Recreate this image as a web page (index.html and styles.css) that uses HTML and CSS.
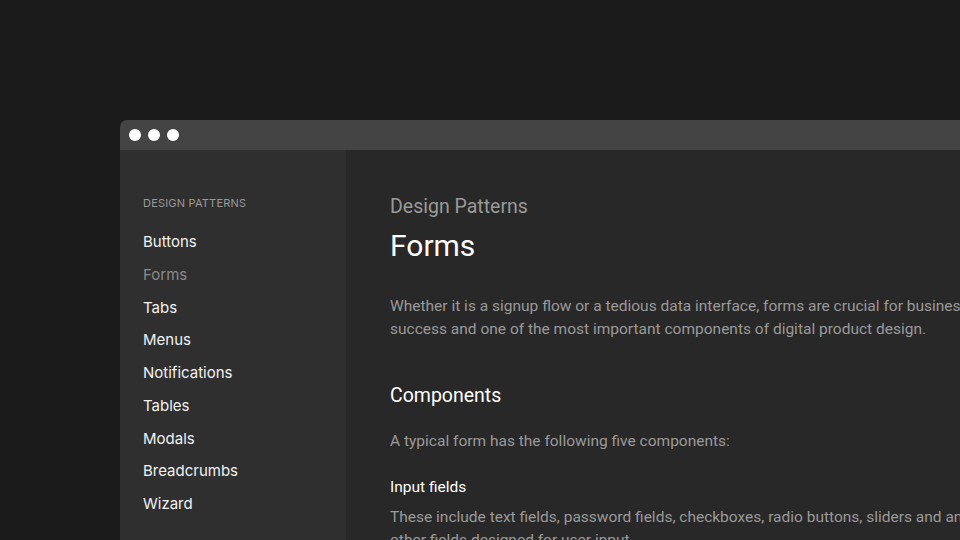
FILE: index.html
```html
<!DOCTYPE html>
<html lang="en">
<head>
  <meta charset="UTF-8" />
  <title>Design Patterns – Forms</title>
  <link rel="stylesheet" href="styles.css">
</head>
<body>
  <div class="window">
    <div class="titlebar">
      <span class="dot"></span>
      <span class="dot"></span>
      <span class="dot"></span>
    </div>
    <div class="body">
      <nav class="sidebar">
        <div class="nav-title">Design Patterns</div>
        <a class="nav-item" href="#">Buttons</a>
        <a class="nav-item active" href="#">Forms</a>
        <a class="nav-item" href="#">Tabs</a>
        <a class="nav-item" href="#">Menus</a>
        <a class="nav-item" href="#">Notifications</a>
        <a class="nav-item" href="#">Tables</a>
        <a class="nav-item" href="#">Modals</a>
        <a class="nav-item" href="#">Breadcrumbs</a>
        <a class="nav-item" href="#">Wizard</a>
      </nav>
      <main class="content">
        <div class="crumb">Design Patterns</div>
        <h1>Forms</h1>
        <p class="lead">Whether it is a signup flow or a tedious data interface, forms are crucial for business success and one of the most important components of digital product design.</p>
        <h2>Components</h2>
        <p>A typical form has the following five components:</p>
        <h3>Input fields</h3>
        <p class="tight">These include text fields, password fields, checkboxes, radio buttons, sliders and any other fields designed for user input.</p>
      </main>
    </div>
  </div>
</body>
</html>
```

FILE: styles.css
```css
* { margin: 0; padding: 0; box-sizing: border-box; }

html, body {
  height: 100%;
  background: #1b1b1b;
  overflow: hidden;
}

body {
  padding: 120px 0 0 120px;
}

.window {
  width: 900px;
  height: 600px;
  border-radius: 7px 7px 0 0;
  overflow: hidden;
  display: flex;
  flex-direction: column;
}

.titlebar {
  height: 30px;
  background: #444444;
  display: flex;
  align-items: center;
  gap: 7px;
  padding-left: 9px;
}

.dot {
  width: 12px;
  height: 12px;
  border-radius: 50%;
  background: #fff;
}

.body {
  flex: 1;
  display: flex;
}

.sidebar {
  width: 226px;
  background: #2f2f2f;
  padding: 46px 0 0 23px;
  display: flex;
  flex-direction: column;
  font-family: Inter, "Liberation Sans", sans-serif;
}

.nav-title {
  font-size: 11px;
  text-transform: uppercase;
  color: #9a9a9a;
  letter-spacing: 0.2px;
  margin-bottom: 16px;
}

.nav-item {
  font-size: 15px;
  line-height: 32.75px;
  color: #f2f2f2;
  text-decoration: none;
}

.nav-item.active {
  color: #8a8a8a;
}

.content {
  flex: 1;
  background: #282828;
  padding: 44px 0 0 44px;
  font-family: Roboto, "Liberation Sans", sans-serif;
  color: #9a9a9a;
}

.crumb {
  font-size: 19.5px;
  line-height: 26px;
  color: #9a9a9a;
}

h1 {
  font-weight: 400;
  font-size: 30px;
  line-height: 40px;
  color: #fff;
  margin-top: 6px;
}

p {
  font-size: 15.5px;
  line-height: 23px;
  width: 600px;
}

.lead {
  margin-top: 29px;
}

h2 {
  font-weight: 400;
  font-size: 19.5px;
  line-height: 28px;
  color: #fff;
  margin-top: 41px;
}

h2 + p {
  margin-top: 20px;
}

h3 {
  font-weight: 400;
  font-size: 15.5px;
  line-height: 22px;
  color: #fff;
  margin-top: 23px;
}

.tight {
  margin-top: 8px;
}
```
